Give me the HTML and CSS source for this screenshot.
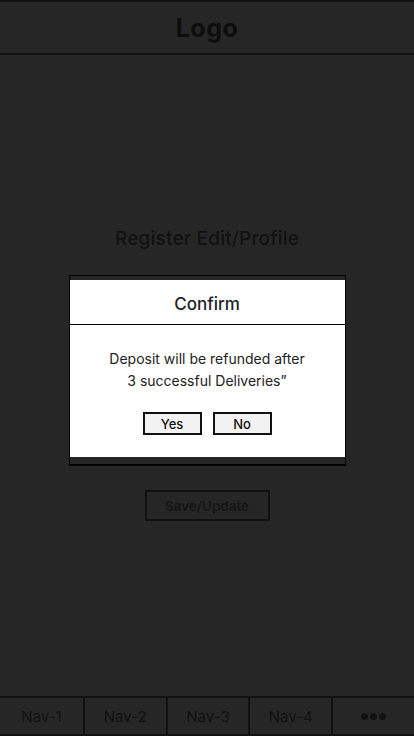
FILE: index.html
```html
<!DOCTYPE html>
<html lang="en">
<head>
<meta charset="utf-8">
<title>Register Edit/Profile</title>
<link rel="stylesheet" href="styles.css">
</head>
<body>
<div class="app">
  <header class="topbar">
    <div class="logo">Logo</div>
  </header>
  <main class="content">
    <h1 class="page-title">Register Edit/Profile</h1>
    <div class="dialog-frame">
      <div class="dialog">
        <div class="dialog-head">Confirm</div>
        <div class="dialog-body">
          <p class="dialog-text">Deposit will be refunded after<br>3 successful Deliveries”</p>
          <div class="dialog-actions">
            <button class="dlg-btn">Yes</button>
            <button class="dlg-btn">No</button>
          </div>
        </div>
      </div>
    </div>
    <button class="save-btn">Save/Update</button>
  </main>
  <nav class="navbar">
    <div class="nav-item">Nav-1</div>
    <div class="nav-item">Nav-2</div>
    <div class="nav-item">Nav-3</div>
    <div class="nav-item">Nav-4</div>
    <div class="nav-item"><span class="dots"><i></i><i></i><i></i></span></div>
  </nav>
</div>
</body>
</html>
```
FILE: styles.css
```css
* { box-sizing: border-box; }
html, body { margin: 0; padding: 0; }
body {
  background: #262626;
  font-family: Inter, "Liberation Sans", sans-serif;
  color: #111;
}
.app {
  width: 414px;
  height: 736px;
  display: flex;
  flex-direction: column;
  overflow: hidden;
}
.topbar {
  height: 55px;
  border-top: 2px solid #111;
  border-bottom: 2px solid #111;
  display: flex;
  align-items: center;
  justify-content: center;
  flex: none;
}
.logo {
  font-size: 25px;
  font-weight: 700;
  color: #0d0d0d;
  letter-spacing: 0.5px;
}
.content {
  flex: 1;
  display: flex;
  flex-direction: column;
  align-items: center;
  padding-top: 173px;
}
.page-title {
  margin: 0;
  font-size: 19px;
  line-height: 22px;
  font-weight: 500;
  color: #111;
  letter-spacing: 0.2px;
}
.dialog-frame {
  margin-top: 25px;
  width: 277px;
  border: 1px solid #000;
  border-bottom-width: 2px;
  padding: 4px 0 7px;
  background: #262626;
}
.dialog {
  background: #fff;
}
.dialog-head {
  height: 45px;
  border-bottom: 1px solid #000;
  display: flex;
  align-items: center;
  justify-content: center;
  font-size: 17px;
  font-weight: 500;
  color: #222;
  padding-top: 3px;
}
.dialog-body {
  padding: 23px 0 22px;
  display: flex;
  flex-direction: column;
  align-items: center;
}
.dialog-text {
  margin: 0;
  text-align: center;
  font-size: 14px;
  line-height: 22px;
  color: #222;
}
.dialog-actions {
  margin-top: 20px;
  display: flex;
  gap: 11px;
}
.dlg-btn {
  width: 59px;
  height: 23px;
  border: 2px solid #111;
  background: #f2f2f2;
  font-family: inherit;
  font-size: 13px;
  font-weight: 500;
  color: #111;
  padding: 0;
}
.save-btn {
  margin-top: 24px;
  width: 125px;
  height: 31px;
  border: 2px solid #111;
  background: transparent;
  font-family: inherit;
  font-size: 13.5px;
  font-weight: 600;
  color: #151515;
  padding: 0;
}
.navbar {
  flex: none;
  height: 40px;
  border-top: 2px solid #111;
  border-bottom: 2px solid #111;
  display: grid;
  grid-template-columns: repeat(5, 1fr);
}
.nav-item {
  display: flex;
  align-items: center;
  justify-content: center;
  font-size: 15px;
  color: #111;
  border-left: 2px solid #111;
}
.nav-item:first-child { border-left: none; }
.dots { display: flex; gap: 2px; }
.dots i {
  display: block;
  width: 7px;
  height: 7px;
  border-radius: 50%;
  background: #111;
}
```
